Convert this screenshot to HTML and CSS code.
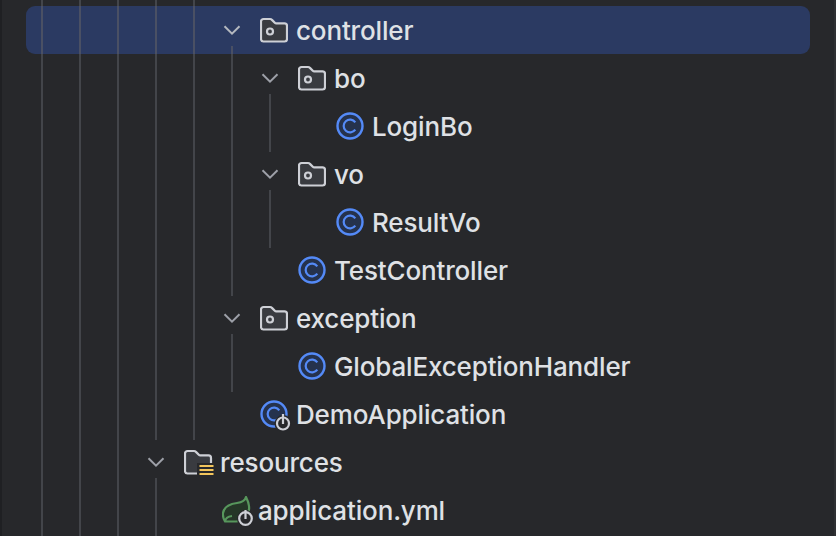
FILE: index.html
```html
<!DOCTYPE html>
<html lang="en">
<head>
    <meta charset="UTF-8">
    <meta name="viewport" content="width=device-width, initial-scale=1.0">
    <title>Project Tree</title>
    <link rel="stylesheet" href="styles.css">
</head>
<body>
    <svg class="sprites" width="0" height="0">
        <symbol id="chevron" viewBox="0 0 18 10">
            <path d="M1.5 1.2 9 8.6l7.5-7.4" fill="none" stroke="currentColor" stroke-width="2"/>
        </symbol>
        <symbol id="package" viewBox="0 0 28 28">
            <path d="M1 5.500a2.500 2.500 0 0 1 2.500-2.500h6.500c1 0 1.500.4 2.200 1.100l2.600 2.700c.4.400.8.600 1.400.600h8.300a2.500 2.500 0 0 1 2.500 2.500v13.100a2.500 2.500 0 0 1-2.500 2.500H3.500A2.500 2.500 0 0 1 1 23.500z" fill="#393b40" stroke="#ced0d6" stroke-width="2.200"/>
            <circle cx="10" cy="15.500" r="3" fill="none" stroke="#ced0d6" stroke-width="2.200"/>
        </symbol>
        <symbol id="class" viewBox="0 0 28 28">
            <circle cx="14" cy="14" r="12.500" fill="#25324d" stroke="#548af7" stroke-width="2.400"/>
            <path d="M19.300 10.300a6.400 6.400 0 1 0 0 7.400" fill="none" stroke="#548af7" stroke-width="2.200"/>
        </symbol>
        <symbol id="resources" viewBox="0 0 30 28">
            <path d="M1 5.500a2.500 2.500 0 0 1 2.500-2.500h6.500c1 0 1.500.4 2.200 1.100l2.600 2.700c.4.400.8.600 1.400.600h8.300a2.500 2.500 0 0 1 2.500 2.500v13.100a2.500 2.500 0 0 1-2.500 2.500H3.500A2.500 2.500 0 0 1 1 23.500z" fill="#393b40" stroke="#ced0d6" stroke-width="2.200"/>
            <rect x="13" y="15" width="17" height="13" fill="#27282b"/>
            <path d="M15.500 18h14M15.500 22h14M15.500 26h14" stroke="#f2c55c" stroke-width="2.200"/>
        </symbol>
        <symbol id="run-class" viewBox="0 0 32 32">
            <circle cx="14" cy="14" r="12.500" fill="#25324d" stroke="#548af7" stroke-width="2.400"/>
            <path d="M19.300 10.300a6.400 6.400 0 1 0 0 7.400" fill="none" stroke="#548af7" stroke-width="2.200"/>
            <circle cx="23" cy="23.500" r="8.500" fill="#27282b"/>
            <circle cx="23" cy="23.500" r="6" fill="none" stroke="#ced0d6" stroke-width="2.200"/>
            <path d="M23 14v10" stroke="#ced0d6" stroke-width="2.200"/>
        </symbol>
        <symbol id="spring" viewBox="0 0 32 32">
            <path d="M24 1C23 5 19 6.500 15 7 8 8 2 10 1 17c-.4 3 .5 6 2 8.500h11c8 0 14-6.500 13-15.500-.2-3-1.500-6-3-9zM3 25.500c.5-3.500 3-5 7-5.500" fill="#253627" stroke="#57965c" stroke-width="2.200" stroke-linejoin="round"/>
            <circle cx="23.500" cy="22.500" r="8.500" fill="#27282b"/>
            <circle cx="23.500" cy="22.500" r="6.300" fill="none" stroke="#ced0d6" stroke-width="2.200"/>
            <path d="M23.500 14v9" stroke="#ced0d6" stroke-width="2.200"/>
        </symbol>
    </svg>

    <div class="tree">
        <div class="row row-stub">
            <span class="cell guide"></span><span class="cell guide"></span><span class="cell guide"></span><span class="cell guide"></span><span class="cell guide"></span>
        </div>

        <div class="row selected">
            <span class="cell guide"></span><span class="cell guide"></span><span class="cell guide"></span><span class="cell guide"></span><span class="cell guide"></span>
            <span class="cell opens"><svg class="chevron"><use href="#chevron"/></svg></span>
            <svg class="icon"><use href="#package"/></svg>
            <span class="name">controller</span>
        </div>

        <div class="row">
            <span class="cell guide"></span><span class="cell guide"></span><span class="cell guide"></span><span class="cell guide"></span><span class="cell guide"></span><span class="cell guide"></span>
            <span class="cell opens"><svg class="chevron"><use href="#chevron"/></svg></span>
            <svg class="icon"><use href="#package"/></svg>
            <span class="name">bo</span>
        </div>

        <div class="row">
            <span class="cell guide"></span><span class="cell guide"></span><span class="cell guide"></span><span class="cell guide"></span><span class="cell guide"></span><span class="cell guide"></span><span class="cell guide last"></span><span class="cell"></span>
            <svg class="icon"><use href="#class"/></svg>
            <span class="name">LoginBo</span>
        </div>

        <div class="row">
            <span class="cell guide"></span><span class="cell guide"></span><span class="cell guide"></span><span class="cell guide"></span><span class="cell guide"></span><span class="cell guide"></span>
            <span class="cell opens"><svg class="chevron"><use href="#chevron"/></svg></span>
            <svg class="icon"><use href="#package"/></svg>
            <span class="name">vo</span>
        </div>

        <div class="row">
            <span class="cell guide"></span><span class="cell guide"></span><span class="cell guide"></span><span class="cell guide"></span><span class="cell guide"></span><span class="cell guide"></span><span class="cell guide last"></span><span class="cell"></span>
            <svg class="icon"><use href="#class"/></svg>
            <span class="name">ResultVo</span>
        </div>

        <div class="row">
            <span class="cell guide"></span><span class="cell guide"></span><span class="cell guide"></span><span class="cell guide"></span><span class="cell guide"></span><span class="cell guide last"></span><span class="cell"></span>
            <svg class="icon"><use href="#class"/></svg>
            <span class="name">TestController</span>
        </div>

        <div class="row">
            <span class="cell guide"></span><span class="cell guide"></span><span class="cell guide"></span><span class="cell guide"></span><span class="cell guide"></span>
            <span class="cell opens"><svg class="chevron"><use href="#chevron"/></svg></span>
            <svg class="icon"><use href="#package"/></svg>
            <span class="name">exception</span>
        </div>

        <div class="row">
            <span class="cell guide"></span><span class="cell guide"></span><span class="cell guide"></span><span class="cell guide"></span><span class="cell guide"></span><span class="cell guide last"></span><span class="cell"></span>
            <svg class="icon"><use href="#class"/></svg>
            <span class="name">GlobalExceptionHandler</span>
        </div>

        <div class="row">
            <span class="cell guide"></span><span class="cell guide"></span><span class="cell guide"></span><span class="cell guide last"></span><span class="cell guide last"></span><span class="cell"></span>
            <svg class="icon icon-badged"><use href="#run-class"/></svg>
            <span class="name">DemoApplication</span>
        </div>

        <div class="row">
            <span class="cell guide"></span><span class="cell guide"></span><span class="cell guide"></span>
            <span class="cell opens"><svg class="chevron"><use href="#chevron"/></svg></span>
            <svg class="icon icon-wide"><use href="#resources"/></svg>
            <span class="name">resources</span>
        </div>

        <div class="row">
            <span class="cell guide"></span><span class="cell guide"></span><span class="cell guide"></span><span class="cell guide"></span><span class="cell"></span>
            <svg class="icon icon-badged"><use href="#spring"/></svg>
            <span class="name">application.yml</span>
        </div>

        <div class="row row-stub">
            <span class="cell guide"></span><span class="cell guide"></span><span class="cell guide"></span><span class="cell guide"></span>
        </div>
    </div>
</body>
</html>
```

FILE: styles.css
```css
* {
    margin: 0;
    padding: 0;
    box-sizing: border-box;
}

body {
    background-color: #27282b;
    color: #dfe1e5;
    font-family: 'Inter', sans-serif;
    height: 100vh;
    overflow: hidden;
}

.sprites {
    display: block;
}

.tree {
    height: 536px;
    overflow: hidden;
    border-left: 2px solid #1f2023;
    border-right: 2px solid #2f3033;
}

.row {
    display: flex;
    align-items: center;
    height: 48px;
    padding-left: 21px;
    position: relative;
    z-index: 0;
}

.row-stub {
    height: 6px;
}

/* selection sits behind the guide lines */
.selected::before {
    content: "";
    position: absolute;
    top: 0;
    bottom: 0;
    left: 24px;
    right: 24px;
    background-color: #2b3a62;
    border-radius: 9px;
    z-index: -1;
}

.cell {
    flex: none;
    width: 38px;
    height: 100%;
    display: flex;
    justify-content: center;
    align-items: center;
    position: relative;
}

.guide::before,
.opens::after {
    content: "";
    position: absolute;
    left: 18px;
    width: 2px;
    background-color: #43454a;
}

.guide::before {
    top: 0;
    bottom: 0;
}

.guide.last::before {
    bottom: -2px;
}

.opens::after {
    top: 40px;
    bottom: 0;
}

.selected .guide::before,
.selected .opens::after {
    background-color: #4a5064;
}

.chevron {
    width: 18px;
    height: 10px;
    color: #9da0a8;
}

.selected .chevron {
    color: #b4b8bf;
}

.icon {
    flex: none;
    width: 28px;
    height: 28px;
    margin-left: 9px;
}

.icon-wide {
    width: 30px;
    margin-right: -2px;
}

.icon-badged {
    width: 32px;
    height: 32px;
    margin-right: -4px;
    position: relative;
    top: 2px;
}

.name {
    margin-left: 8px;
    font-size: 26px;
    font-weight: 450;
    letter-spacing: -0.15px;
    white-space: nowrap;
}
```
